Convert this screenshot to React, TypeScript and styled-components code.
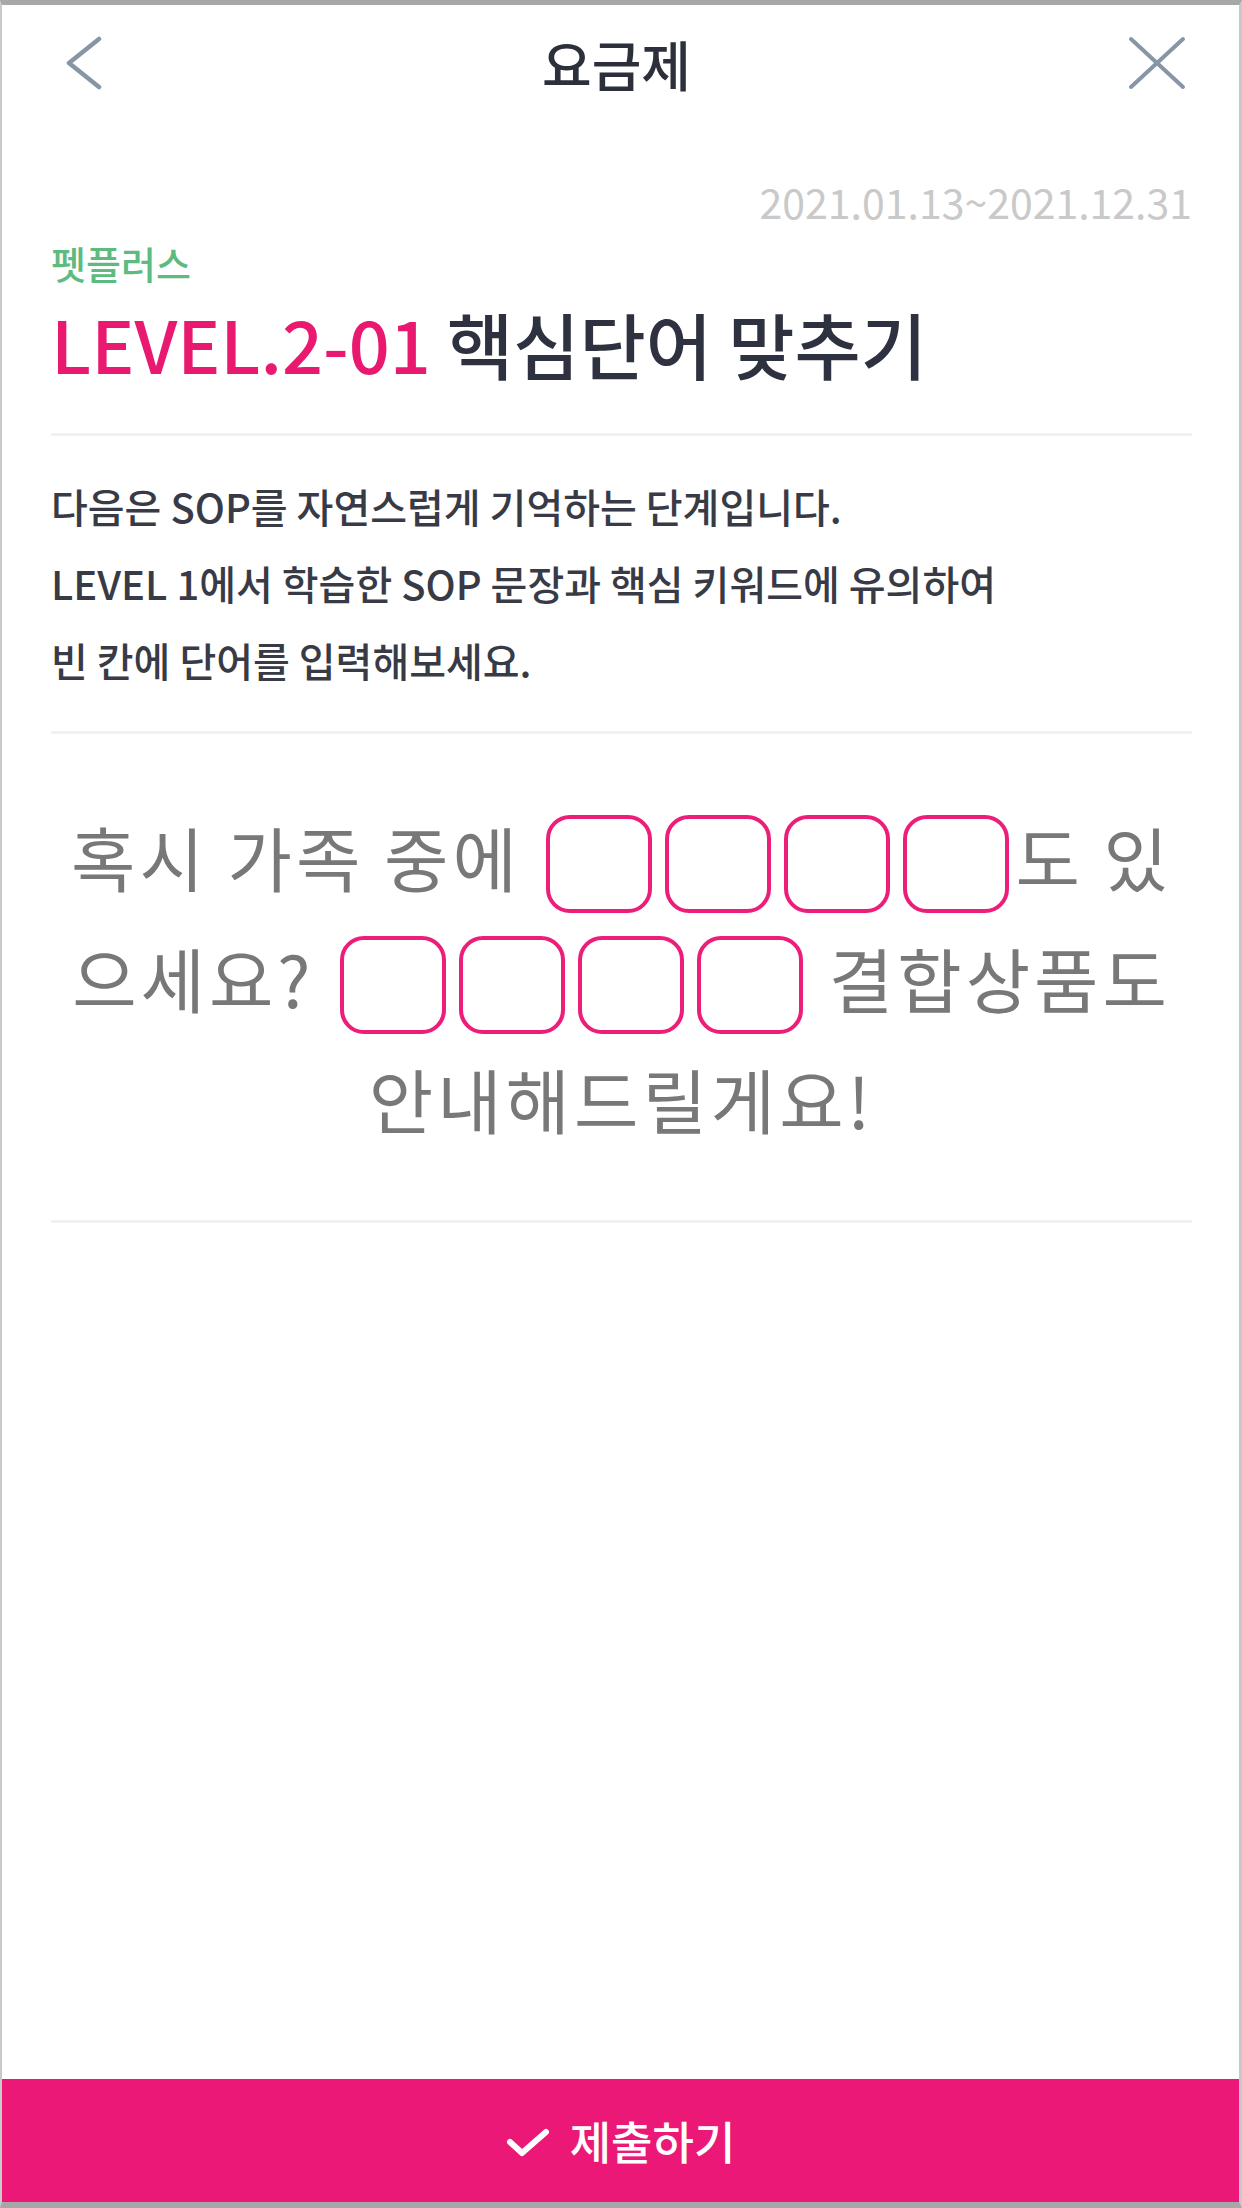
import React from "react";
import styled, { createGlobalStyle } from "styled-components";

const GlobalStyle = createGlobalStyle`
  html, body {
    margin: 0;
    padding: 0;
    background: #ffffff;
  }
  body {
    font-family: "Noto Sans CJK KR", "Noto Sans", sans-serif;
  }
`;

const blankLines = [
  { before: "혹시 가족 중에 ", count: 4, after: "도 있" },
  { before: "으세요? ", count: 4, after: " 결합상품도" },
  { before: "안내해드릴게요!", count: 0, after: "" },
];

const App = (): JSX.Element => {
  return (
    <>
      <GlobalStyle />
      <Frame>
        <Header>
          <IconButton aria-label="back">
            <svg width="40" height="56" viewBox="0 0 40 56">
              <polyline
                points="33,4 3,28 33,52"
                fill="none"
                stroke="#8796a6"
                strokeWidth="4.5"
                strokeLinecap="round"
                strokeLinejoin="round"
              />
            </svg>
          </IconButton>
          <HeaderTitle>요금제</HeaderTitle>
          <IconButton aria-label="close">
            <svg width="60" height="56" viewBox="0 0 60 56">
              <line x1="4" y1="4" x2="56" y2="52" stroke="#8796a6" strokeWidth="4" strokeLinecap="round" />
              <line x1="56" y1="4" x2="4" y2="52" stroke="#8796a6" strokeWidth="4" strokeLinecap="round" />
            </svg>
          </IconButton>
        </Header>

        <Body>
          <Period>2021.01.13~2021.12.31</Period>
          <Category>펫플러스</Category>
          <Title>
            <Level>LEVEL.2-01</Level> 핵심단어 맞추기
          </Title>
          <Divider />
          <Guide>
            다음은 SOP를 자연스럽게 기억하는 단계입니다.
            <br />
            LEVEL 1에서 학습한 SOP 문장과 핵심 키워드에 유의하여
            <br />
            빈 칸에 단어를 입력해보세요.
          </Guide>
          <Divider />
          <Quiz>
            {blankLines.map((line, i) => (
              <QuizLine key={i}>
                {line.before}
                {line.count > 0 && (
                  <Blanks>
                    {Array.from({ length: line.count }).map((_, j) => (
                      <Blank key={j} />
                    ))}
                  </Blanks>
                )}
                {line.after}
              </QuizLine>
            ))}
          </Quiz>
          <Divider />
        </Body>

        <Spacer />

        <SubmitButton>
          <svg width="44" height="30" viewBox="0 0 44 30">
            <polyline
              points="4,14 16,25 40,4"
              fill="none"
              stroke="#ffffff"
              strokeWidth="6"
              strokeLinecap="round"
              strokeLinejoin="round"
            />
          </svg>
          제출하기
        </SubmitButton>
      </Frame>
    </>
  );
};

export default App;

const Frame = styled.div`
  width: 1242px;
  height: 2208px;
  box-sizing: border-box;
  border-top: 5px solid #a7a7a7;
  border-bottom: 6px solid #a7a7a7;
  border-left: 2px solid #c9c9c9;
  border-right: 3px solid #c9c9c9;
  display: flex;
  flex-direction: column;
  background: #ffffff;
  overflow: hidden;
`;

const Header = styled.div`
  height: 116px;
  display: flex;
  align-items: center;
  justify-content: space-between;
  padding: 0 52px 0 64px;
`;

const IconButton = styled.div`
  display: flex;
  align-items: center;
  justify-content: center;
`;

const HeaderTitle = styled.h1`
  margin: 0;
  font-size: 54px;
  font-weight: 500;
  color: #2c303b;
`;

const Body = styled.div`
  padding: 0 47px 0 49px;
  display: flex;
  flex-direction: column;
`;

const Period = styled.div`
  margin-top: 56px;
  text-align: right;
  font-size: 41px;
  line-height: 48px;
  color: #c9c9c9;
`;

const Category = styled.div`
  margin-top: 16px;
  font-size: 38px;
  line-height: 44px;
  color: #5dbb80;
  font-weight: 500;
`;

const Title = styled.h2`
  margin: 14px 0 46px;
  font-size: 72px;
  line-height: 88px;
  font-weight: 500;
  color: #2e3240;
`;

const Level = styled.span`
  color: #e9196f;
`;

const Divider = styled.div`
  height: 3px;
  background: #f0f1f4;
`;

const Guide = styled.p`
  margin: 0;
  padding: 32px 0 32px;
  font-size: 40px;
  line-height: 77px;
  font-weight: 500;
  color: #383b46;
`;

const Quiz = styled.div`
  padding: 62px 0 61px;
`;

const QuizLine = styled.div`
  text-align: center;
  white-space: pre;
  font-size: 70px;
  line-height: 121px;
  color: #787878;
  letter-spacing: 4px;
`;

const Blanks = styled.span`
  display: inline-flex;
  gap: 13px;
  margin: 0 6px;
  vertical-align: middle;
  position: relative;
  top: -4px;
`;

const Blank = styled.span`
  display: inline-block;
  width: 106px;
  height: 98px;
  box-sizing: border-box;
  border: 4px solid #ec1e79;
  border-radius: 24px;
`;

const Spacer = styled.div`
  flex: 1;
`;

const SubmitButton = styled.button`
  height: 123px;
  border: none;
  margin: 0;
  background: #ec1877;
  color: #ffffff;
  font-family: "Noto Sans CJK KR", "Noto Sans", sans-serif;
  font-size: 45px;
  font-weight: 500;
  display: flex;
  align-items: center;
  justify-content: center;
  gap: 20px;
  padding: 0;
  cursor: pointer;

  svg {
    margin-top: 4px;
  }
`;
